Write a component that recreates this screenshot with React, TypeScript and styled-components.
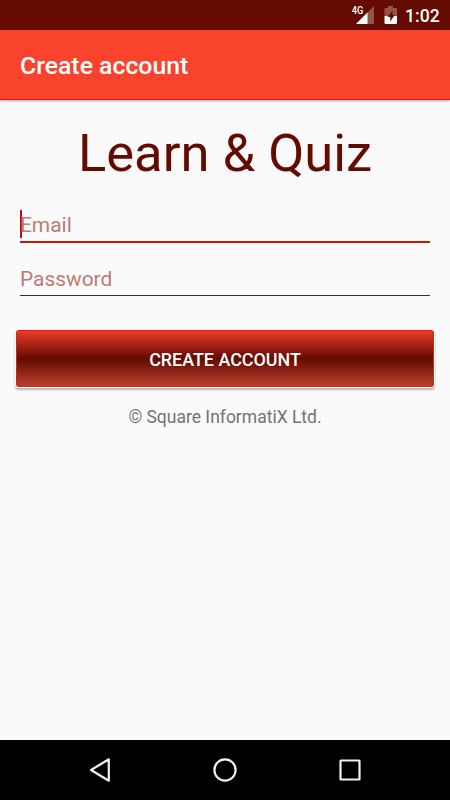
import React from "react";
import styled, { createGlobalStyle } from "styled-components";

const GlobalStyle = createGlobalStyle`
  *, *::before, *::after { box-sizing: border-box; }
  body { margin: 0; background: #fafafa; }
`;

const Screen = styled.div`
  display: flex;
  flex-direction: column;
  width: 450px;
  height: 800px;
  overflow: hidden;
  background: #fafafa;
  font-family: Roboto, "Liberation Sans", sans-serif;
`;

const StatusBar = styled.header`
  display: flex;
  flex: none;
  align-items: center;
  justify-content: flex-end;
  height: 30px;
  padding-right: 10px;
  background: #640a00;
  color: #fff;
`;

const StatusIcons = styled.svg`
  display: block;
  width: 50px;
  height: 30px;
`;

const Clock = styled.time`
  width: 35px;
  margin-left: 5px;
  padding-top: 1px;
  font-size: 17.6px;
  font-weight: 500;
  line-height: 30px;
  white-space: nowrap;
`;

const AppBar = styled.div`
  display: flex;
  flex: none;
  align-items: center;
  height: 70px;
  padding: 3px 20px 0;
  background: #f9432c;
  border-bottom: 1px solid #e51409;
  box-shadow: 0 1px 2px rgba(20, 65, 70, 0.4);
`;

const AppTitle = styled.h1`
  margin: 0;
  color: #fff;
  font-size: 24.8px;
  font-weight: 500;
  line-height: 30px;
`;

const Content = styled.main`
  display: flex;
  flex: 1;
  flex-direction: column;
  padding: 22px 16px 0;
`;

const Brand = styled.h2`
  margin: 0;
  color: #640a00;
  font-size: 52.5px;
  font-weight: 400;
  line-height: 62px;
  text-align: center;
`;

const Field = styled.label<{ $focused?: boolean }>`
  display: flex;
  align-items: center;
  height: ${(p) => (p.$focused ? 33 : 32)}px;
  margin: ${(p) => (p.$focused ? "26px 4px 0" : "21px 4px 0")};
  border-bottom: ${(p) => (p.$focused ? "2px solid #c51a00" : "1px solid #2e3232")};
`;

const Caret = styled.span`
  width: 2px;
  height: 28px;
  margin: -4px -2px 0 0;
  background: #c40d0a;
`;

const Input = styled.input`
  flex: 1;
  min-width: 0;
  height: 30px;
  margin-top: -1px;
  padding: 0;
  border: 0;
  outline: 0;
  background: transparent;
  color: #640a00;
  font: 400 20.9px/30px Roboto, "Liberation Sans", sans-serif;

  &::placeholder {
    color: #bc7b73;
    opacity: 1;
  }
`;

const SubmitButton = styled.button`
  height: 57px;
  margin: 34px 0 0;
  padding: 2px 0 0;
  border: 1px solid #c52b18;
  border-top-color: #f01208;
  border-radius: 3px;
  background: linear-gradient(#ea3c29 0%, #640a00 50%, #b9402f 100%);
  box-shadow: 0 0 0 1px #fff, 0 2px 2px 1px rgba(0, 0, 0, 0.28);
  color: #fff;
  font: 500 17.9px/20px Roboto, "Liberation Sans", sans-serif;
  text-transform: uppercase;
`;

const Copyright = styled.p`
  margin: 20px 0 0;
  color: #737373;
  font-size: 17.5px;
  line-height: 21px;
  text-align: center;
`;

const NavBar = styled.nav`
  display: flex;
  flex: none;
  justify-content: center;
  height: 60px;
  background: #000;
`;

const NavButton = styled.button`
  display: flex;
  align-items: center;
  justify-content: center;
  width: 125px;
  padding: 0;
  border: 0;
  background: transparent;
`;

const NavIcon = styled.svg`
  display: block;
  width: 30px;
  height: 30px;
  fill: none;
  stroke: #f1f1f1;
  stroke-width: 2.2;
  stroke-linejoin: round;
`;

const NetworkLabel = styled.text`
  fill: #fff;
  font: 500 10px "Roboto", sans-serif;
`;

export default function App() {
  return (
    <>
      <GlobalStyle />
      <Screen>
        <StatusBar>
          <StatusIcons viewBox="350 0 50 30">
            <path d="M374 6V24H356Z" fill="#fff" fillOpacity=".3" />
            <path d="M367.5 12.5V24H356Z" fill="#fff" />
            <NetworkLabel x="351.7" y="13.7" textLength="11.5" lengthAdjust="spacingAndGlyphs">4G</NetworkLabel>
            <path d="M388 6h5v2h4v8h-12.5V8H388Z" fill="#fff" fillOpacity=".3" />
            <path d="M384.5 16H397v6.7q0 1.3-1.3 1.3h-9.9q-1.3 0-1.3-1.3Z" fill="#fff" />
            <path d="M392.5 10.5l-5 6.5h2.7v4.5l4.6-6.5h-2.3Z" fill="#640a00" />
          </StatusIcons>
          <Clock>1:02</Clock>
        </StatusBar>
        <AppBar>
          <AppTitle>Create account</AppTitle>
        </AppBar>
        <Content>
          <Brand>Learn &amp; Quiz</Brand>
          <Field $focused>
            <Caret />
            <Input type="email" placeholder="Email" />
          </Field>
          <Field>
            <Input type="password" placeholder="Password" />
          </Field>
          <SubmitButton type="button">Create account</SubmitButton>
          <Copyright>© Square InformatiX Ltd.</Copyright>
        </Content>
        <NavBar>
          <NavButton aria-label="Back">
            <NavIcon viewBox="0 0 30 30"><path d="M23.8 4.3V25.7L6 15Z" /></NavIcon>
          </NavButton>
          <NavButton aria-label="Home">
            <NavIcon viewBox="0 0 30 30"><circle cx="15" cy="15" r="10.6" /></NavIcon>
          </NavButton>
          <NavButton aria-label="Recent apps">
            <NavIcon viewBox="0 0 30 30"><rect x="5.5" y="5.5" width="19" height="19" rx=".5" /></NavIcon>
          </NavButton>
        </NavBar>
      </Screen>
    </>
  );
}
